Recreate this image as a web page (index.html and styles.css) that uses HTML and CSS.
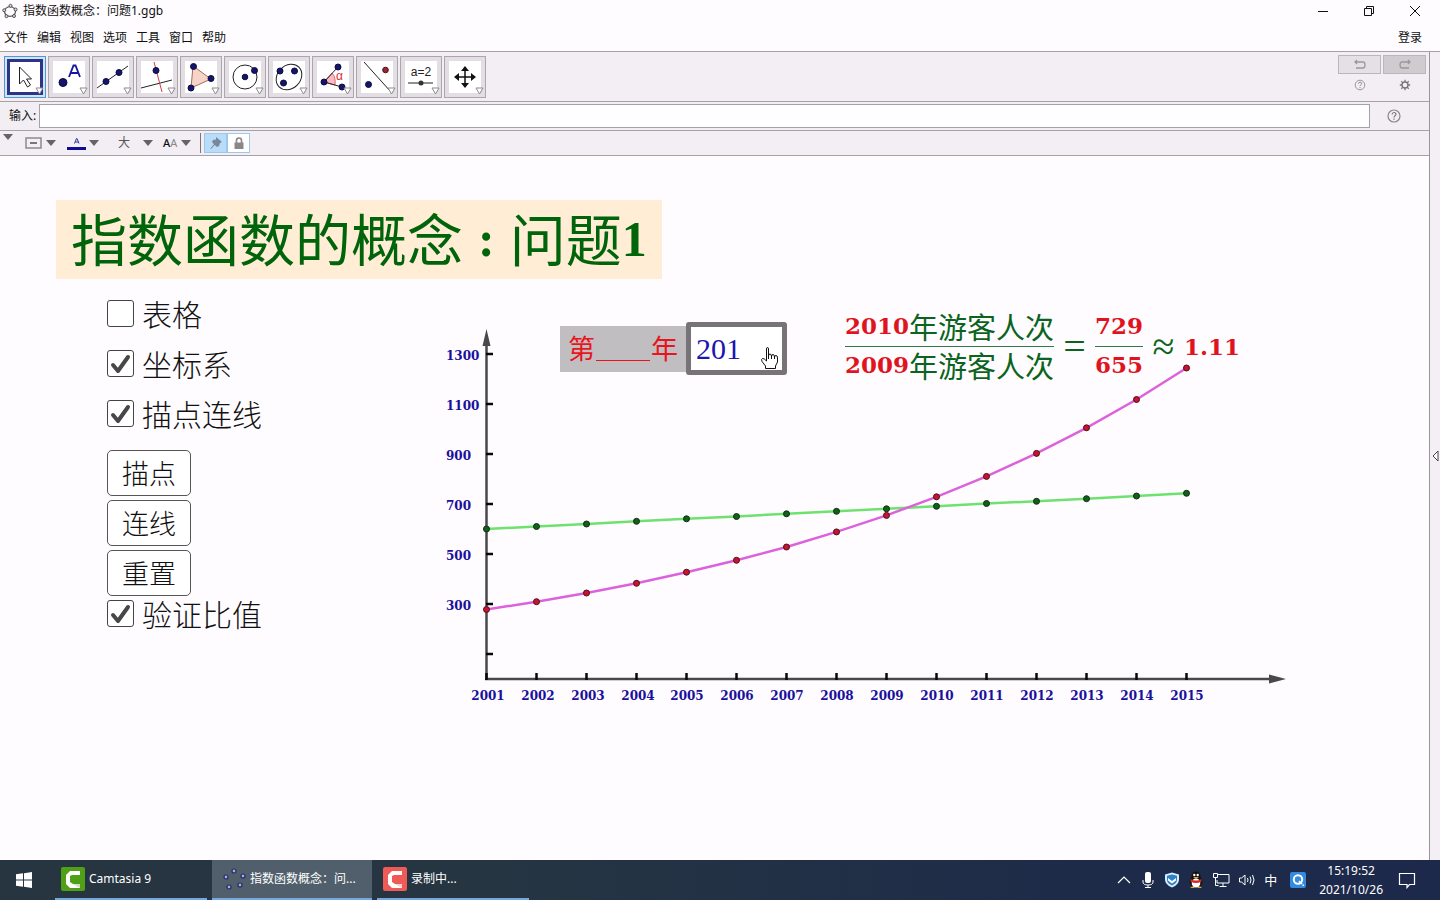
FILE: index.html
```html
<!DOCTYPE html>
<html lang="zh-CN">
<head>
<meta charset="utf-8">
<title>指数函数概念：问题1.ggb</title>
<link rel="stylesheet" href="styles.css">
</head>
<body>
<div class="window">
  <header class="titlebar">
    <svg class="app-icon" width="16" height="16" viewBox="0 0 16 16"><ellipse cx="8" cy="8.500" rx="5.500" ry="4.800" fill="none" stroke="#555" stroke-width="1.200"/><g fill="#dcdce6" stroke="#444" stroke-width=".9"><circle cx="8.500" cy="2.800" r="1.500"/><circle cx="13.600" cy="6.500" r="1.500"/><circle cx="12" cy="13" r="1.500"/><circle cx="4.500" cy="13.200" r="1.500"/><circle cx="2.200" cy="7.300" r="1.500"/></g></svg>
    <span class="caption">指数函数概念：问题1.ggb</span>
    <button class="win-btn" aria-label="最小化"><svg width="12" height="12" viewBox="0 0 12 12"><path d="M1 6.500h10" stroke="#111" fill="none"/></svg></button>
    <button class="win-btn" aria-label="还原"><svg width="12" height="12" viewBox="0 0 12 12"><path d="M1.500 3.500h7v7h-7zM3.500 3.500v-2h7v7h-2" stroke="#111" fill="none"/></svg></button>
    <button class="win-btn" aria-label="关闭"><svg width="12" height="12" viewBox="0 0 12 12"><path d="M1 1l10 10M11 1L1 11" stroke="#111" fill="none"/></svg></button>
  </header>
  <nav class="menubar">
    <button>文件</button><button>编辑</button><button>视图</button><button>选项</button><button>工具</button><button>窗口</button><button>帮助</button>
    <button class="login">登录</button>
  </nav>
  <div class="workspace">
    <main class="main">
      <div class="toolbar">
        <button class="tool selected" aria-label="移动"><svg width="42" height="42" viewBox="0 0 42 42"><path d="M15.500 11v17l4-4 4 7 3-2-4-6h5z" fill="#fff" stroke="#222"/><path class="drop" d="M32 32h7l-3.500 6z"/></svg></button>
        <button class="tool" aria-label="描点"><svg width="42" height="42" viewBox="0 0 42 42"><circle cx="15" cy="26.500" r="4" class="pt"/><path d="M21 21L25.500 9.500h2L32 21M22.500 17h8" fill="none" stroke="#1714a0" stroke-width="1.800"/><path class="drop" d="M32 32h7l-3.500 6z"/></svg></button>
        <button class="tool" aria-label="直线"><svg width="42" height="42" viewBox="0 0 42 42"><path d="M5 32L36 10" stroke="#222"/><circle cx="14" cy="25.500" r="3" class="pt"/><circle cx="27" cy="16.500" r="3" class="pt"/><path class="drop" d="M32 32h7l-3.500 6z"/></svg></button>
        <button class="tool" aria-label="垂线"><svg width="42" height="42" viewBox="0 0 42 42"><path d="M5 32l31-8" stroke="#222"/><path d="M18 6l8 30" stroke="#d33a4a"/><circle cx="20" cy="14.500" r="3" class="pt"/><path class="drop" d="M32 32h7l-3.500 6z"/></svg></button>
        <button class="tool" aria-label="多边形"><svg width="42" height="42" viewBox="0 0 42 42"><path d="M13 10l18 13-20 9z" fill="#f6d5c8" stroke="#a86a5c"/><circle cx="13.500" cy="10.500" r="3" class="pt"/><circle cx="31" cy="22.500" r="3" class="pt"/><circle cx="11" cy="32" r="3" class="pt"/><path class="drop" d="M32 32h7l-3.500 6z"/></svg></button>
        <button class="tool" aria-label="圆"><svg width="42" height="42" viewBox="0 0 42 42"><circle cx="21" cy="21" r="12" fill="none" stroke="#222"/><circle cx="21" cy="21" r="2.800" class="pt"/><circle cx="30.500" cy="14.500" r="3" class="pt"/><path class="drop" d="M32 32h7l-3.500 6z"/></svg></button>
        <button class="tool" aria-label="椭圆"><svg width="42" height="42" viewBox="0 0 42 42"><ellipse cx="21" cy="21" rx="14" ry="11.500" transform="rotate(-45 21 21)" fill="none" stroke="#222"/><circle cx="12" cy="15" r="3" class="pt"/><circle cx="26.500" cy="15" r="3" class="pt"/><circle cx="15.500" cy="27" r="3" class="pt"/><path class="drop" d="M32 32h7l-3.500 6z"/></svg></button>
        <button class="tool" aria-label="角度"><svg width="42" height="42" viewBox="0 0 42 42"><path d="M12 26l8-9q4 4 3 12z" fill="#fbb9c0" stroke="#d36a75"/><path d="M26 11L12 26l18 5" fill="none" stroke="#222"/><circle cx="26" cy="11" r="3" class="pt"/><circle cx="12" cy="26" r="3" class="pt"/><circle cx="30" cy="31" r="3" class="pt"/><text x="24" y="24" class="alpha">α</text><path class="drop" d="M32 32h7l-3.500 6z"/></svg></button>
        <button class="tool" aria-label="轴对称"><svg width="42" height="42" viewBox="0 0 42 42"><path d="M8 6l27 30" stroke="#222"/><circle cx="12.500" cy="28.500" r="3" class="pt"/><circle cx="29.500" cy="14" r="2.800" fill="#9e2431" stroke="#4a1118"/><path class="drop" d="M32 32h7l-3.500 6z"/></svg></button>
        <button class="tool" aria-label="滑动条"><svg width="42" height="42" viewBox="0 0 42 42"><text x="21" y="20" text-anchor="middle" class="slider-text">a=2</text><path d="M8 27h25" stroke="#222"/><circle cx="21" cy="27" r="2.500" fill="#333"/><path class="drop" d="M32 32h7l-3.500 6z"/></svg></button>
        <button class="tool" aria-label="移动视图"><svg width="42" height="42" viewBox="0 0 42 42"><path d="M21 13v16M13 21h16" stroke="#111" stroke-width="1.500"/><path d="M21 10l4 5h-8zM21 32l4-5h-8zM10 21l5-4v8zM32 21l-5-4v8z" fill="#111"/><path class="drop" d="M32 32h7l-3.500 6z"/></svg></button>
        <div class="side-tools">
          <button class="history" aria-label="撤销"><svg width="14" height="12" viewBox="0 0 14 12"><path d="M2 3h8q2 0 2 3t-2 3H3M4 1L2 3l2 2" fill="none" stroke="#999" stroke-width="1.300"/></svg></button>
          <button class="history redo" aria-label="重做"><svg width="14" height="12" viewBox="0 0 14 12"><path d="M12 3H4Q2 3 2 6t2 3h7M10 1l2 2-2 2" fill="none" stroke="#999" stroke-width="1.300"/></svg></button>
          <button class="plain" aria-label="帮助"><svg width="12" height="12" viewBox="0 0 12 12"><circle cx="6" cy="6" r="4.800" fill="none" stroke="#999"/><path d="M4.400 4.700q.2-1.500 1.700-1.500t1.600 1.400q0 .8-.9 1.300T6 7.200M6 8.200v1" fill="none" stroke="#888"/></svg></button>
          <button class="plain" aria-label="设置"><svg width="12" height="12" viewBox="0 0 12 12"><circle cx="6" cy="6" r="3" fill="none" stroke="#777" stroke-width="1.400"/><path d="M6 .8v2M6 9.200v2M.8 6h2M9.200 6h2M2.300 2.300l1.300 1.300M8.400 8.400l1.300 1.300M2.300 9.700l1.300-1.300M8.400 3.600l1.300-1.300" stroke="#777" stroke-width="1.300"/></svg></button>
        </div>
      </div>
      <div class="inputbar">
        <label for="cmd">输入:</label>
        <input id="cmd" type="text">
        <button class="plain help" aria-label="输入帮助"><svg width="14" height="14" viewBox="0 0 14 14"><circle cx="7" cy="7" r="6" fill="none" stroke="#888" stroke-width="1.200"/><path d="M5 5.500q.3-2 2-2t2 1.700q0 .9-1 1.500T7 8.400M7 9.500v1.300" fill="none" stroke="#777" stroke-width="1.200"/></svg></button>
      </div>
      <div class="stylebar">
        <button class="plain" aria-label="收起"><svg width="10" height="6" viewBox="0 0 10 6"><path class="arrow" d="M0 0h10L5 6z"/></svg></button>
        <button class="plain fill" aria-label="填充"><svg width="32" height="14" viewBox="0 0 32 14"><path d="M1 2h15v10H1z" fill="none" stroke="#8d8a8d" stroke-width="1.500"/><path d="M5 7h7" stroke="#777" stroke-width="2"/><path class="arrow" d="M21 4h10l-5 6z"/></svg></button>
        <button class="plain color" aria-label="文字颜色"><svg width="34" height="16" viewBox="0 0 34 16"><path d="M7.500 8.500l2-5h.5l2 5M8.300 7h3" fill="none" stroke="#33309e"/><path d="M0 12h19v3H0z" fill="#0e0a9a"/><path class="arrow" d="M22 5h10l-5 6z"/></svg></button>
        <button class="plain size" aria-label="文字大小">大<svg width="10" height="6" viewBox="0 0 10 6"><path class="arrow" d="M0 0h10L5 6z"/></svg></button>
        <button class="plain font" aria-label="字体"><b>A</b><i>A</i><svg width="10" height="6" viewBox="0 0 10 6"><path class="arrow" d="M0 0h10L5 6z"/></svg></button>
        <div class="toggles">
          <button class="on" aria-label="固定"><svg width="14" height="14" viewBox="0 0 14 14"><path d="M7 1l6 5-2 1-1 3-2 1-2.300-2L2 13l-.6-.5L5 8.200 3 6l1-2 3-.5z" fill="#78889a"/></svg></button>
          <button aria-label="锁定"><svg width="14" height="14" viewBox="0 0 14 14"><path d="M4.500 7V4.500Q4.500 2 7 2t2.500 2.500V7" fill="none" stroke="#888" stroke-width="1.600"/><path d="M2.500 6.500h9V13h-9z" fill="#8a878a"/></svg></button>
        </div>
      </div>
      <section class="sheet">
        <h1 class="heading">指数函数的概念<span class="colon">:</span>问题<span class="num">1</span></h1>
        <div class="board">
          <div class="controls">
            <label><input type="checkbox">表格</label>
            <label><input type="checkbox" checked>坐标系</label>
            <label><input type="checkbox" checked>描点连线</label>
            <button>描点</button>
            <button>连线</button>
            <button>重置</button>
            <label><input type="checkbox" checked>验证比值</label>
          </div>
          <div class="plot">
            <svg class="chart" width="850" height="420" viewBox="440 290 850 420" role="img" aria-label="2001至2015年游客人次">
              <defs>
                <marker id="green-dot" markerUnits="userSpaceOnUse" markerWidth="10" markerHeight="10" refX="5" refY="5"><circle cx="5" cy="5" r="3" fill="#12601a" stroke="#112d14"/></marker>
                <marker id="red-dot" markerUnits="userSpaceOnUse" markerWidth="10" markerHeight="10" refX="5" refY="5"><circle cx="5" cy="5" r="3" fill="#c8142e" stroke="#4c101a"/></marker>
              </defs>
              <path class="axis" d="M486.500 680V344M485 679H1271"/>
              <path class="tip" d="M486.500 329l4 17h-8zM1286 679l-17-4.500v9z"/>
              <path class="tick" d="M486 354h7M486 404h7M486 454h7M486 504h7M486 554h7M486 604h7M486 654h7M486.500 673v7M536.500 673v7M586.500 673v7M636.500 673v7M686.500 673v7M736.500 673v7M786.500 673v7M836.500 673v7M886.500 673v7M936.500 673v7M986.500 673v7M1036.500 673v7M1086.500 673v7M1136.500 673v7M1186.500 673v7"/>
              <g class="tick-label">
                <text x="446" y="360">1300</text><text x="446" y="410">1100</text><text x="446" y="460">900</text><text x="446" y="510">700</text><text x="446" y="560">500</text><text x="446" y="610">300</text>
              </g>
              <g class="tick-label years">
                <text x="488" y="700">2001</text><text x="538" y="700">2002</text><text x="588" y="700">2003</text><text x="638" y="700">2004</text><text x="687" y="700">2005</text><text x="737" y="700">2006</text><text x="787" y="700">2007</text><text x="837" y="700">2008</text><text x="887" y="700">2009</text><text x="937" y="700">2010</text><text x="987" y="700">2011</text><text x="1037" y="700">2012</text><text x="1087" y="700">2013</text><text x="1137" y="700">2014</text><text x="1187" y="700">2015</text>
              </g>
              <polyline class="linear" points="486.500,529 536.500,526.500 586.500,524 636.500,521.300 686.500,518.800 736.500,516.500 786.500,513.800 836.500,511.300 886.500,508.800 936.500,506.300 986.500,503.500 1036.500,501.300 1086.500,498.700 1136.500,496 1186.500,493.300"/>
              <polyline class="growth" points="486.500,609.500 536.500,601.700 586.500,593 636.500,583.300 686.500,572.200 736.500,560.300 786.500,547 836.500,531.900 886.500,515.400 936.500,496.800 986.500,476.400 1036.500,453.400 1086.500,427.800 1136.500,399.500 1186.500,368"/>
            </svg>
            <div class="year-entry">
              <label for="year">第<span class="blank"></span>年</label>
              <input id="year" type="text" value="201">
              <svg class="hand" width="19" height="24" viewBox="0 0 19 24"><path d="M6.500 13V3Q6.500 1.500 7.500 1.500T8.500 3v7q0-2 1.500-2t1.500 2.500Q11.500 8.500 13 8.500t1.500 2.500q0-1.500 1.500-1.500t1.500 2.500v4l-2 4v2.500h-10V20L2 15.500Q1 13 2.500 12.500T6.500 15z" fill="#fff" stroke="#111"/><path d="M8.500 9v4M11.500 10v3M14.500 11v2" stroke="#111"/></svg>
            </div>
            <div class="formula">
              <div class="fraction"><div><b>2010</b>年游客人次</div><div><b>2009</b>年游客人次</div></div>
              <span class="op">=</span>
              <div class="fraction"><b>729</b><b>655</b></div>
              <span class="op">≈</span>
              <b>1.11</b>
            </div>
          </div>
        </div>
      </section>
    </main>
    <aside class="rail"><button class="plain" aria-label="展开侧栏"><svg width="7" height="12" viewBox="0 0 7 12"><path d="M6 1v10L1 6z" fill="#fff" stroke="#444"/></svg></button></aside>
  </div>
  <footer class="taskbar">
    <button class="start" aria-label="开始"><svg width="16" height="16" viewBox="0 0 16 16"><path d="M0 2.300L7 1.300V7.500H0zM8 1.200L16 0v7.500H8zM0 8.500h7v6.200l-7-1zM8 8.500h8V16l-8-1.200z" fill="#fff"/></svg></button>
    <button class="task"><svg width="24" height="24" viewBox="0 0 24 24"><rect width="24" height="24" rx="2" fill="#4f9f17"/><path d="M19 4H9L5 8v9l4 4h10v-4h-7l-3-2V9l2-1h8z" fill="#fff"/><path d="M12 17h7v4z" fill="#cbe2bd"/></svg>Camtasia 9</button>
    <button class="task active"><svg width="24" height="24" viewBox="0 0 24 24"><g fill="#a5aaff" stroke="#252b5c" stroke-width="1.200"><circle cx="12" cy="4" r="2"/><circle cx="4" cy="10" r="2"/><circle cx="21" cy="9" r="2"/><circle cx="7" cy="20" r="2"/><circle cx="18" cy="18" r="2"/></g></svg>指数函数概念：问...</button>
    <button class="task"><svg width="24" height="24" viewBox="0 0 24 24"><rect width="24" height="24" rx="2" fill="#ee5a55"/><path d="M19 4H9L5 8v9l4 4h10v-4h-7l-3-2V9l2-1h8z" fill="#fff"/><path d="M12 17h7v4z" fill="#f9cfcd"/></svg>录制中...</button>
    <div class="tray">
      <svg width="16" height="16" viewBox="0 0 16 16"><path d="M2 11l6-6 6 6" fill="none" stroke="#fff" stroke-width="1.200"/></svg>
      <svg width="16" height="18" viewBox="0 0 16 18"><rect x="5" y="1" width="6" height="11" rx="2" fill="#fff"/><path d="M3 9v2q0 3 5 3t5-3V9M8 14v2M5 16.500h6" fill="none" stroke="#fff"/></svg>
      <svg width="16" height="16" viewBox="0 0 16 16"><path d="M8 .5l7 2v5q0 5-7 8-7-3-7-8v-5z" fill="#d6ecff"/><path d="M8 2.500l5 1.300v4q0 3.500-5 5.700Q3 11.300 3 7.800v-4z" fill="#2b80c8"/><path d="M4 6l4 3 4-3v2.500l-4 3-4-3z" fill="#fff"/></svg>
      <svg width="16" height="18" viewBox="0 0 16 18"><ellipse cx="8" cy="10.500" rx="6.500" ry="5.500" fill="#111"/><ellipse cx="8" cy="5.500" rx="4.500" ry="5" fill="#111"/><ellipse cx="8" cy="12" rx="4.300" ry="4.500" fill="#fff"/><circle cx="6.300" cy="4" r="1.200" fill="#fff"/><circle cx="9.700" cy="4" r="1.200" fill="#fff"/><path d="M5 6h6l-3 2z" fill="#f5a623"/><path d="M2.500 8q5.500 3 11 0v2.500q-5.500 3-11 0z" fill="#d5282b"/><path d="M2 17q3-3 5 0zM9 17q3-3 5 0z" fill="#f5a623"/></svg>
      <svg width="18" height="16" viewBox="0 0 18 16"><path d="M6 2.500h11v8.500H5V8M11 11v3M7.500 14.500h7M1.500 1.500h4v4h-4zM3.500 5.500v8h3" fill="none" stroke="#fff"/></svg>
      <svg width="18" height="16" viewBox="0 0 18 16"><path d="M1.500 6h2L7 3v10l-3.500-3h-2zM9.500 6q1 2 0 4M12 4.500q2 3.500 0 7M14.500 3q3 5 0 10" fill="none" stroke="#fff"/></svg>
      <span class="ime">中</span>
      <svg class="qsearch" width="16" height="16" viewBox="0 0 16 16"><rect width="16" height="16" rx="2" fill="#348ade"/><circle cx="8" cy="7.500" r="4.200" fill="none" stroke="#fff" stroke-width="2"/><path d="M9 9l3 3" stroke="#fff" stroke-width="1.600"/><path d="M12.500 12.500h1.500v1.500h-1.500z" fill="#fff"/></svg>
      <time class="clock">15:19:52<br>2021/10/26</time>
      <svg width="18" height="18" viewBox="0 0 18 18"><path d="M1.500 2.500h15v11h-5l-2.500 3v-3H1.500z" fill="none" stroke="#fff" stroke-width="1.200"/></svg>
    </div>
  </footer>
</div>
</body>
</html>
```
FILE: styles.css
```css
* { box-sizing: border-box; }
body {
  margin: 0;
  background: #fefcff;
  color: #111;
  font: 12px/16px "Noto Sans", "Noto Sans CJK SC", sans-serif;
}
button, input { font: inherit; color: inherit; margin: 0; padding: 0; }
button { border: 0; background: none; cursor: default; }
svg { display: block; flex: none; }
.window { min-height: 100vh; display: flex; flex-direction: column; }
.titlebar { display: flex; align-items: center; height: 25px; padding: 0 19px 3px 2px; }
.caption { margin: 0 auto 0 5px; }
.win-btn { display: grid; place-items: center; width: 12px; height: 20px; margin-left: 34px; }
.menubar { display: flex; gap: 9px; height: 27px; padding: 0 18px 0 4px; border-bottom: 1px solid #a5a1a5; }
.login { margin-left: auto; }
.workspace { flex: 1; display: flex; }
.main { flex: 1; min-width: 0; display: flex; flex-direction: column; }
.rail { width: 11px; border-left: 1px solid #999599; background: #f3eff4; display: flex; justify-content: center; align-items: center; }
.plain { display: flex; align-items: center; justify-content: center; }
.toolbar { display: flex; gap: 2px; height: 50px; padding: 4px 3px 0 4px; background: #f2eef3; border-bottom: 1px solid #a5a1a5; }
.tool { width: 42px; height: 42px; border: 1px solid #aaa6aa; background: #fff; box-shadow: inset 0 0 0 4px #e2dee3; }
.tool svg { margin: -1px; }
.tool.selected { border-color: #5596cf; box-shadow: inset 0 0 0 2px #cfe4f6, inset 0 0 0 5px #2b3488; }
.pt { fill: #15156e; stroke: #0d0d3c; }
.drop { fill: #fff; stroke: #8d8a8d; }
.alpha { fill: #d8303a; font: 12px "Liberation Sans", sans-serif; }
.slider-text { fill: #222; font: 12px "Liberation Sans", sans-serif; }
.side-tools { display: grid; grid-template-columns: 43px 43px; grid-template-rows: 19px 1fr; column-gap: 2px; margin: -1px 0 6px auto; }
.history { display: grid; place-items: center; border: 1px solid #bab6ba; background: #e4e0e5; }
.redo { background: #cfcbcf; }
.inputbar { display: flex; align-items: center; height: 29px; padding-left: 9px; background: #f2eef3; border-bottom: 1px solid #a5a1a5; }
.inputbar label { width: 30px; white-space: nowrap; }
.inputbar input { flex: 1; min-width: 0; height: 24px; border: 1px solid #a5a1a5; background: #fefdff; padding: 0 4px; }
.help { width: 48px; margin-right: 11px; }
.stylebar { display: flex; align-items: center; height: 25px; padding-left: 3px; background: #f2eef3; border-bottom: 1px solid #a5a1a5; }
.stylebar > .plain:first-child { margin-bottom: 12px; }
.arrow { fill: #666266; }
.fill { margin-left: 12px; }
.color { margin-left: 10px; }
.size { gap: 13px; margin-left: 17px; color: #555; }
.font { margin-left: 10px; font-size: 11px; }
.font b { font-weight: 500; }
.font i { color: #888; font-style: normal; }
.font svg { margin-left: 4px; }
.toggles { display: flex; margin-left: 9px; padding-left: 3px; border-left: 1px solid #777; }
.toggles button { display: grid; place-items: center; width: 23px; height: 20px; border: 1px solid #9ac9ef; background: #fff; }
.toggles .on { background: #b9dcf9; }
.sheet { flex: 1; padding: 44px 0 0 56px; }
.heading {
  display: flex;
  align-items: flex-start;
  width: fit-content;
  height: 79px;
  margin: 0 0 11px;
  padding: 0 15px;
  background: #ffedd6;
  color: #00640a;
  font: 400 56px/73px "Noto Sans CJK SC", sans-serif;
}
.colon, .num { font-family: "Liberation Serif", serif; font-weight: 700; font-size: 50px; line-height: 79px; }
.colon { padding: 0 15px; }
.board { display: flex; padding-left: 51px; }
.controls { display: grid; grid-auto-rows: 50px; align-items: start; justify-items: start; align-content: start; width: 333px; padding-top: 10px; }
.controls label { display: flex; align-items: center; gap: 8px; height: 26px; font: 300 30px/26px "Noto Sans CJK SC", sans-serif; }
.controls input { appearance: none; width: 27px; height: 27px; border: 1px solid #444; border-radius: 3px; background: #fff; }
.controls input:checked { background: #fff url("data:image/svg+xml,%3Csvg xmlns='http://www.w3.org/2000/svg' viewBox='0 0 25 25'%3E%3Cpath d='M5 14l5 6L20 6' fill='none' stroke='%23494649' stroke-width='4' stroke-linecap='round' stroke-linejoin='round'/%3E%3C/svg%3E"); }
.controls button { height: 46px; padding: 0 14px; border: 1px solid #555; border-radius: 5px; background: #fff; font: 300 27px/40px "Noto Sans CJK SC", sans-serif; }
.plot { position: relative; }
.axis { fill: none; stroke: #4b484b; stroke-width: 2.500; }
.tip { fill: #4b484b; }
.tick { fill: none; stroke: #080808; stroke-width: 2.500; }
.tick-label { fill: #1a109c; font: 700 12px "DejaVu Serif", serif; }
.years { text-anchor: middle; }
.linear, .growth { fill: none; stroke-width: 2.500; }
.linear { stroke: #6ee26e; marker: url(#green-dot); }
.growth { stroke: #dc62dc; marker: url(#red-dot); }
.year-entry { position: absolute; left: 120px; top: 32px; display: flex; align-items: center; }
.year-entry label { height: 46px; padding: 0 8px; background: #c1bec1; color: #e8141e; font: 27px/44px "Noto Sans CJK SC", sans-serif; white-space: nowrap; }
.blank { display: inline-block; width: 54px; margin: 0 1px; border-bottom: 1px solid #e8141e; vertical-align: -2px; }
.year-entry input { width: 101px; height: 53px; padding: 0 5px; border: 5px solid #787377; border-radius: 3px; background: #fff; color: #1c16b0; font: 30px/40px "Liberation Serif", serif; }
.hand { position: absolute; right: 8px; top: 24px; }
.formula { position: absolute; left: 405px; top: 18px; display: flex; align-items: center; color: #0a6420; font: 29px/36px "Noto Sans CJK SC", sans-serif; white-space: nowrap; }
.formula b { color: #e0141e; font-family: "DejaVu Serif", serif; font-size: 23px; }
.fraction { display: flex; flex-direction: column; }
.fraction > :first-child { border-bottom: 1px solid #2f7a45; }
.fraction > * { display: flex; height: 39px; }
.op { width: 41px; text-align: center; font-family: "Liberation Serif", serif; font-size: 40px; }
.taskbar { display: flex; height: 40px; color: #fff; background: linear-gradient(90deg, #263540, #263542 35%, #1d2b49 75%, #1d294b); }
.start { display: grid; place-items: center; width: 48px; margin-right: 7px; }
.task { display: flex; align-items: center; gap: 4px; width: 152px; margin-right: 5px; padding-left: 6px; border-bottom: 2px solid #76a8dc; white-space: nowrap; }
.task.active { width: 160px; padding-left: 10px; background: #505f6b; }
.tray { display: flex; align-items: center; gap: 8px; margin-left: auto; padding-right: 24px; }
.ime { font-size: 13px; }
.qsearch { margin-left: 5px; }
.clock { margin: 0 7px 0 5px; text-align: center; line-height: 19px; }
```
